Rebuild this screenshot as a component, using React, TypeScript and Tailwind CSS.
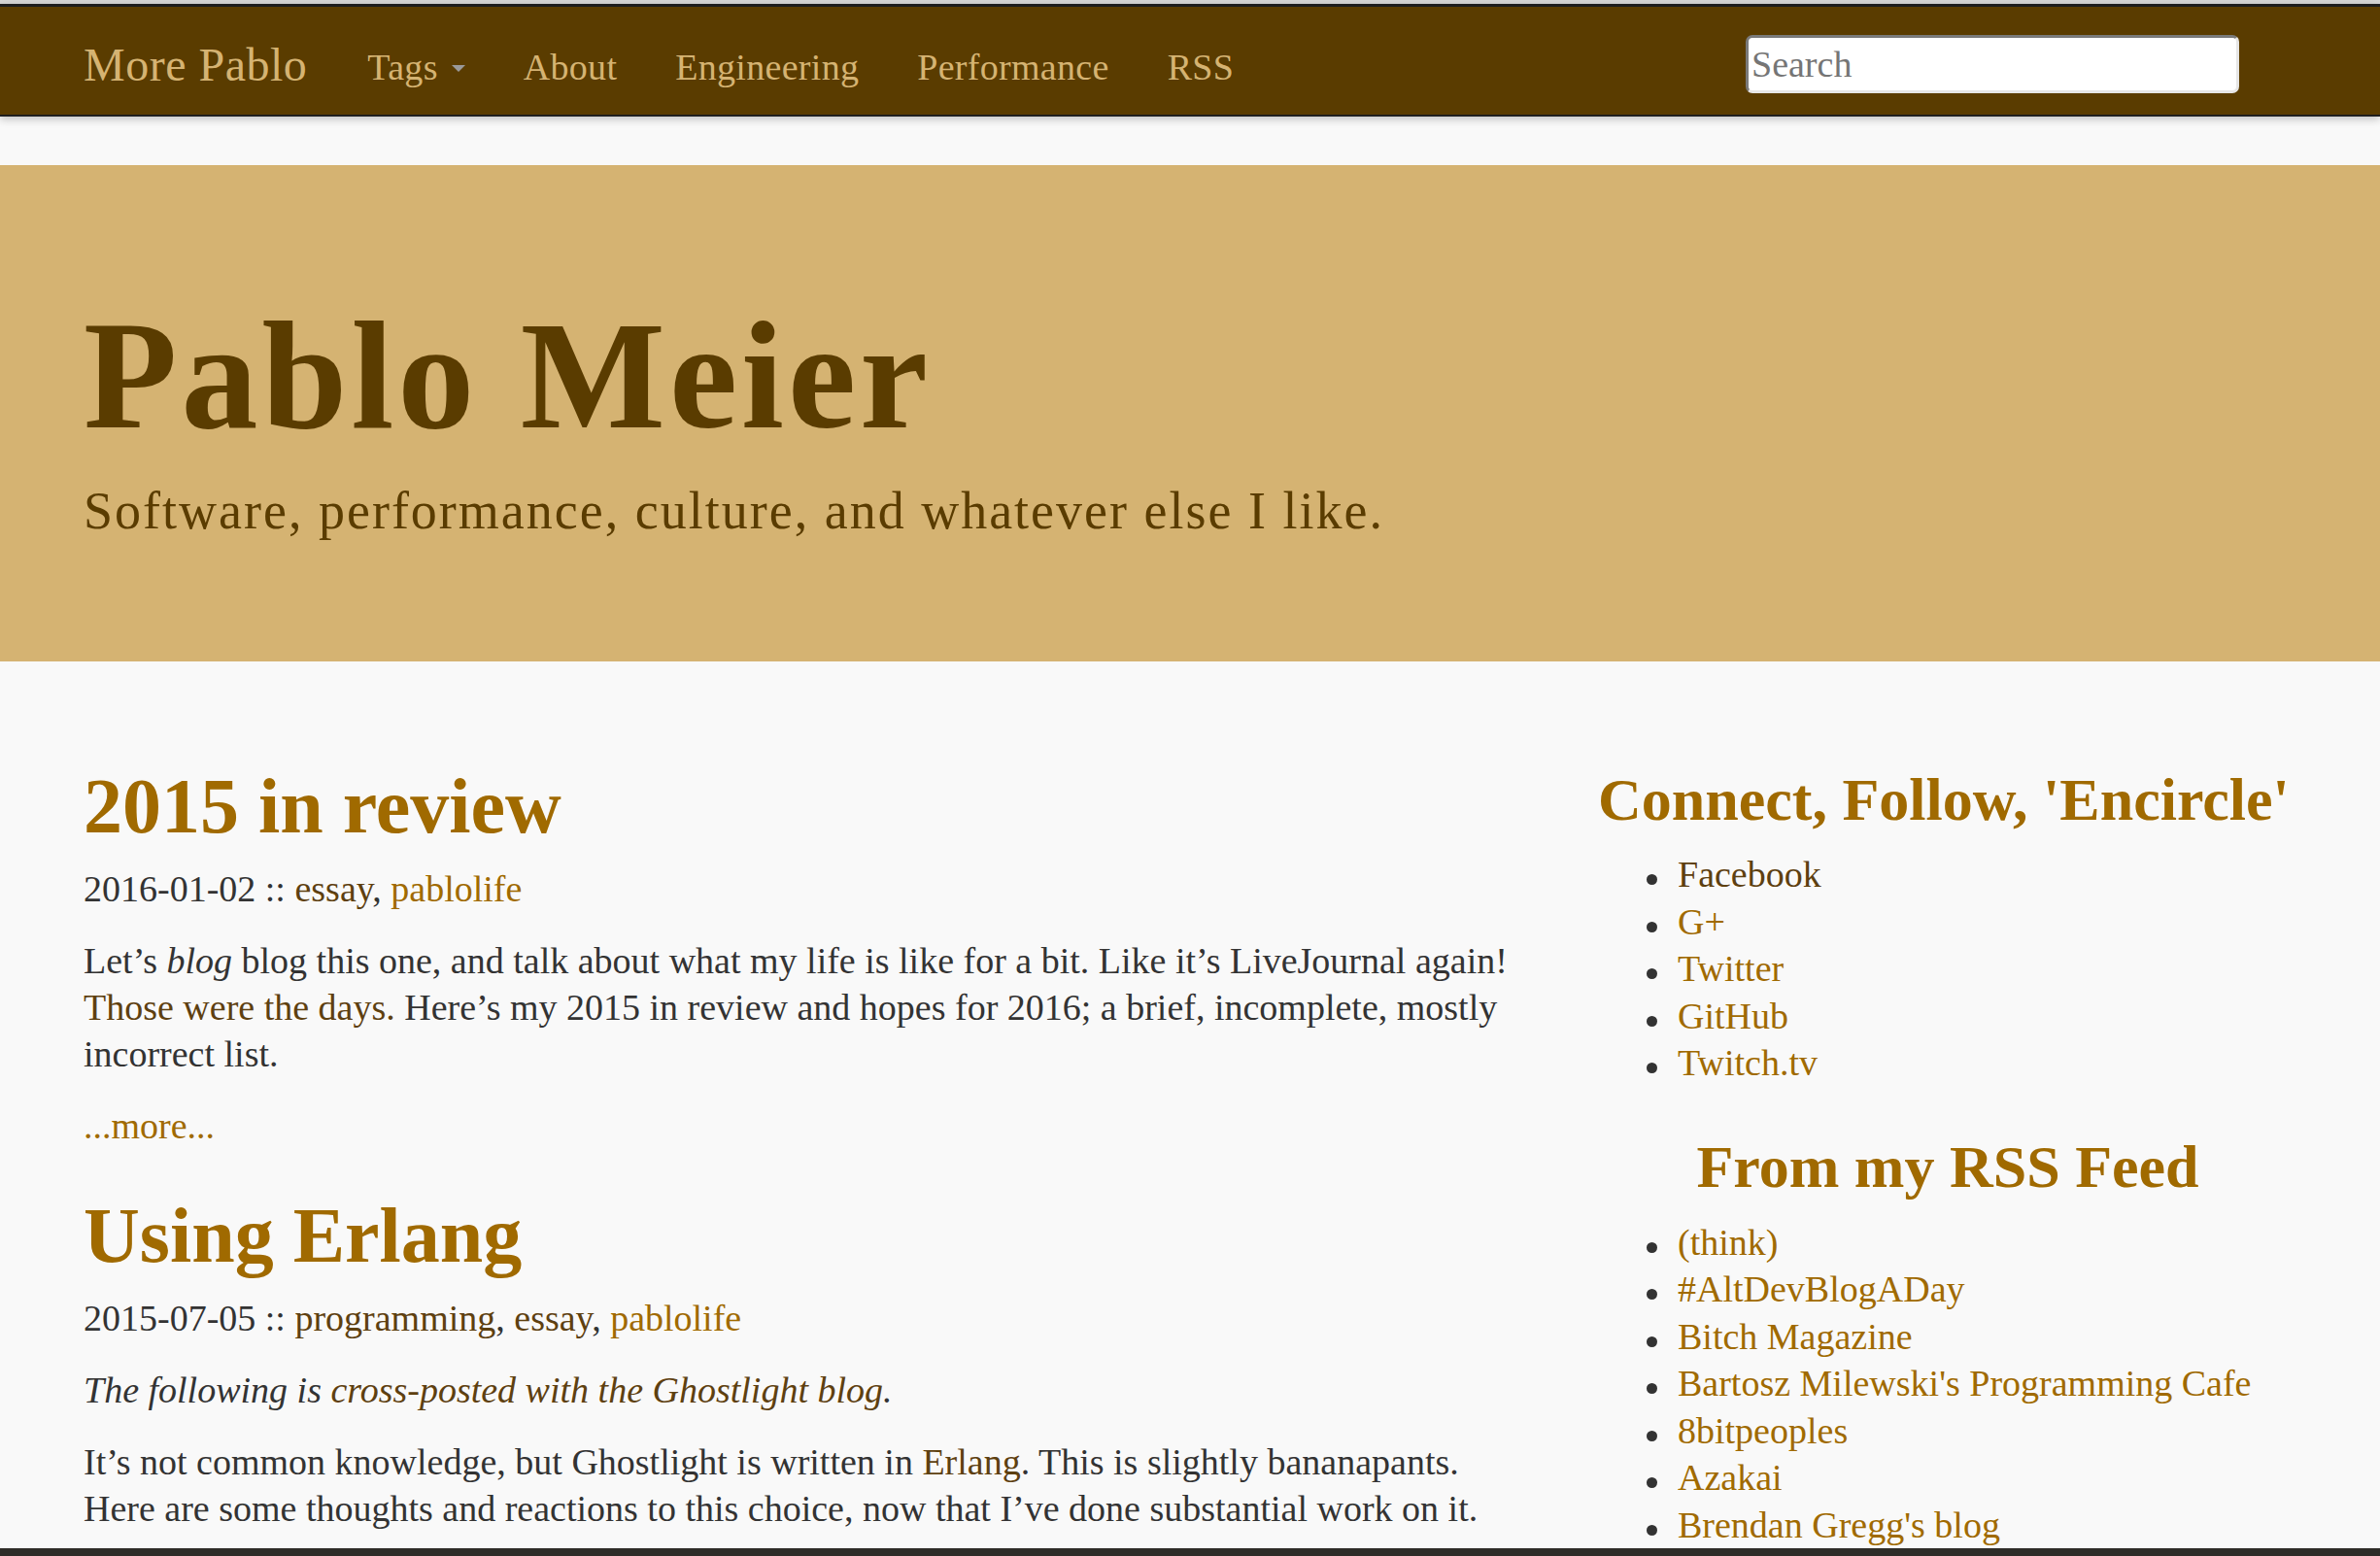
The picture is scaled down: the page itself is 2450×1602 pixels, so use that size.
const visited = "text-[#5e4010]";
const link = "text-[#a06a00]";

const socials = [
  { label: "Facebook", seen: true },
  { label: "G+", seen: false },
  { label: "Twitter", seen: false },
  { label: "GitHub", seen: false },
  { label: "Twitch.tv", seen: false },
];

const feeds = [
  "(think)",
  "#AltDevBlogADay",
  "Bitch Magazine",
  "Bartosz Milewski's Programming Cafe",
  "8bitpeoples",
  "Azakai",
  "Brendan Gregg's blog",
];

function NavBar() {
  return (
    <div className="shrink-0">
      <div className="h-[4px] bg-[#d6d6d6]" />
      <nav className="relative z-10 flex h-[116px] items-center border-t-[3px] border-b-[2px] border-t-[#1e1e1e] border-b-[#1f1f1f] bg-[#5a3c00] pt-[12px] text-[#d5b372] shadow-[0_3px_8px_rgba(0,0,0,0.22)]">
        <a className="-mt-[3px] pl-[86px] text-[48px] leading-none tracking-[0.5px]">More Pablo</a>
        <ul className="ml-[32px] flex items-center text-[38px] leading-none tracking-[0.3px]">
          <li className="flex items-center px-[30px]">
            Tags
            <span className="ml-[14px] mt-[4px] h-0 w-0 border-x-[7px] border-t-[7px] border-x-transparent border-t-[#9a9a9a]" />
          </li>
          <li className="px-[30px]">About</li>
          <li className="px-[30px]">Engineering</li>
          <li className="px-[30px]">Performance</li>
          <li className="px-[30px]">RSS</li>
        </ul>
        <input
          type="text"
          placeholder="Search"
          className="mr-[145px] ml-auto -mt-[6px] h-[60px] w-[508px] rounded-[7px] border-[3px] border-t-[#7a7a7a] border-l-[#7a7a7a] border-r-[#e6e6e6] border-b-[#e6e6e6] bg-white px-[3px] text-[38px] text-[#333] outline-none placeholder:text-[#757575]"
        />
      </nav>
    </div>
  );
}

function Jumbotron() {
  return (
    <header className="mt-[50px] shrink-0 bg-[#d5b372] pt-[138px] pb-[122px] pl-[86px] text-[#5a3c00]">
      <h1 className="text-[158px] leading-none font-bold tracking-[4px]">Pablo Meier</h1>
      <p className="mt-[28px] text-[54px] leading-[65px] tracking-[2px]">
        Software, performance, culture, and whatever else I like.
      </p>
    </header>
  );
}

function Bullet({ children }: { children: React.ReactNode }) {
  return (
    <li className="flex">
      <span className="mt-[24px] mr-[21px] ml-[50px] h-[11px] w-[11px] shrink-0 rounded-full bg-[#333]" />
      {children}
    </li>
  );
}

function Posts() {
  return (
    <main className="w-[1486px] shrink-0 text-[38px] leading-[48px] text-[#333]">
      <article>
        <h2 className={`mt-[19px] mb-[17px] text-[80px] leading-[88px] font-bold ${link}`}>2015 in review</h2>
        <p className="mb-[26px]">
          2016-01-02 :: <a className={visited}>essay</a>, <a className={link}>pablolife</a>
        </p>
        <p className="mb-[26px]">
          Let’s <em>blog</em> blog this one, and talk about what my life is like for a bit. Like it’s LiveJournal
          again! <a className={visited}>Those were the days.</a> Here’s my 2015 in review and hopes for 2016; a
          brief, incomplete, mostly incorrect list.
        </p>
        <p className="mb-[45px]">
          <a className={link}>...more...</a>
        </p>
      </article>
      <article>
        <h2 className={`mt-[19px] mb-[17px] text-[80px] leading-[88px] font-bold ${link}`}>Using Erlang</h2>
        <p className="mb-[26px]">
          2015-07-05 :: <a className={visited}>programming</a>, <a className={visited}>essay</a>,{" "}
          <a className={link}>pablolife</a>
        </p>
        <p className="mb-[26px] italic">
          The following is <a className={visited}>cross-posted with the Ghostlight blog</a>.
        </p>
        <p className="mb-[26px]">
          It’s not common knowledge, but Ghostlight is written in <a className={visited}>Erlang</a>. This is
          slightly bananapants. Here are some thoughts and reactions to this choice, now that I’ve done substantial
          work on it.
        </p>
      </article>
    </main>
  );
}

function Sidebar() {
  return (
    <aside className="ml-[73px] w-[720px] shrink-0 text-[38px] leading-[48.5px] text-[#333]">
      <h3 className={`mt-[22px] text-[62px] leading-[68px] font-bold ${link}`}>Connect, Follow, 'Encircle'</h3>
      <ul className="mt-[19px]">
        {socials.map((s) => (
          <Bullet key={s.label}>
            <a className={s.seen ? visited : link}>{s.label}</a>
          </Bullet>
        ))}
      </ul>
      <h3 className={`mt-[48px] text-center text-[62px] leading-[68px] font-bold ${link}`}>From my RSS Feed</h3>
      <ul className="mt-[20px]">
        {feeds.map((f) => (
          <Bullet key={f}>
            <a className={link}>{f}</a>
          </Bullet>
        ))}
      </ul>
    </aside>
  );
}

export default function App() {
  return (
    <div className="flex h-[1602px] flex-col overflow-hidden bg-[#f9f9f9] font-['Liberation_Serif',serif]">
      <NavBar />
      <Jumbotron />
      <div className="flex min-h-0 flex-1 overflow-hidden pt-[86px] pl-[86px]">
        <Posts />
        <Sidebar />
      </div>
      <div className="h-[8px] shrink-0 bg-[#2e2c28]" />
    </div>
  );
}
